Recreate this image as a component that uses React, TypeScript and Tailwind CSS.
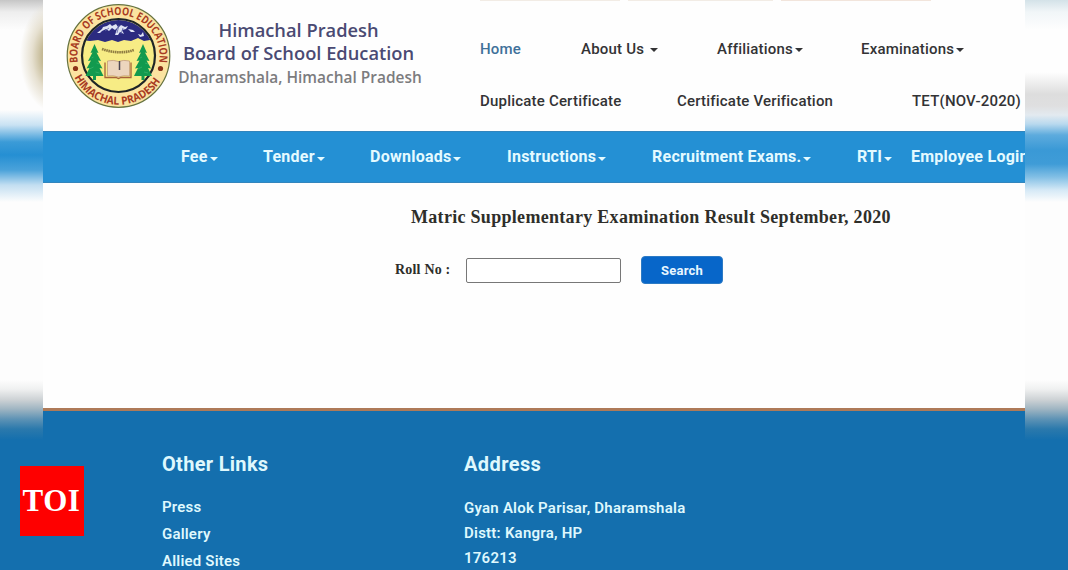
import React from "react";

function Caret({ className = "" }: { className?: string }) {
  return (
    <svg viewBox="0 0 8 4" className={`inline-block h-1 w-2 shrink-0 fill-current ${className}`}>
      <path d="M0 0h8L4 4z" />
    </svg>
  );
}

function Tree({ x }: { x: number }) {
  return (
    <g transform={`translate(${x} 0)`} fill="#129a4e">
      <path d="M0 44l-4 9 2-.5-4.500 8.500 3-.5-4.500 8 3-.5-4 8h7.500v4h3v-4h7.500l-4-8 3 .5-4.500-8 3 .5-4.500-8.500 2 .5z" />
      <path d="M-3 58l2-1M2 63l3 1M-5 69l4-2M1 72l4 1" stroke="#3ab56e" strokeWidth=".7" />
    </g>
  );
}

function Seal() {
  return (
    <svg viewBox="66 3 106 106" className="h-[106px] w-[106px] shrink-0">
      <defs>
        <clipPath id="sealInner">
          <circle cx="118.500" cy="55.500" r="35.500" />
        </clipPath>
        <path id="arcTop" d="M77.800 62.500A41.200 41.200 0 1 1 159.200 62.500" />
        <path id="arcBottom" d="M69.700 61A49.100 49.100 0 0 0 167.300 61" />
      </defs>
      <circle cx="118.500" cy="56" r="51.300" fill="#fbe3a0" stroke="#66733f" strokeWidth="1.200" />
      <circle cx="118.500" cy="55.500" r="36.500" fill="#f7ec85" stroke="#1e2526" strokeWidth="2.200" />
      <g clipPath="url(#sealInner)">
        <path d="M80 18h77v24l-7-2-6 1-6-3-7 3-7-1-6 2-6-2-7 2-7-2-8 1-10-1z" fill="#2b2b80" />
        <path
          d="M97 33l5-4 1-2 4-1 3-2 2 2 4-2 2 3-3 3-3-2-3 3-3-2-4 2-2 2zM115 35l2-6 4-4 4 2 3-1-2 3-4 1 2 4-4-2-2 3zM128 29l5 1 2 2-4 0zM138 34l3 1 2-3 1 4-4 1z"
          fill="#dfe3f4"
        />
        <path d="M119 25l-2 8M123 28l-2 6M105 31l4-3" stroke="#5c62a5" strokeWidth=".8" />
      </g>
      <Tree x={94.5} />
      <Tree x={143} />
      <path d="M102 49q17 6 32 1" fill="none" stroke="#8f7d42" strokeWidth="2.600" strokeDasharray="1.600 .6" />
      <path d="M105 62.500v15h11l2.500 1 2.500-1h10v-15" fill="none" stroke="#a8613a" strokeWidth="1.300" />
      <path d="M107.500 61q6-1.500 11 .500 5-2 11-.500v15q-6-1-11 1-5-2-11-1z" fill="#ecd5bd" stroke="#bf9472" strokeWidth=".7" />
      <path d="M119.500 61v9" stroke="#4c4550" strokeWidth="1.500" />
      <circle cx="75.500" cy="68.500" r="2.600" fill="#8c3218" />
      <circle cx="160.500" cy="68.500" r="2.600" fill="#8c3218" />
      <g fill="#a83b22" fontFamily="Open Sans, Noto Sans, sans-serif" fontWeight="700">
        <text fontSize="11">
          <textPath href="#arcTop" textLength="142" lengthAdjust="spacingAndGlyphs">
            BOARD OF SCHOOL EDUCATION
          </textPath>
        </text>
        <text fontSize="11">
          <textPath href="#arcBottom" startOffset="17" textLength="105" lengthAdjust="spacingAndGlyphs">
            HIMACHAL PRADESH
          </textPath>
        </text>
      </g>
    </svg>
  );
}

function BlurredEdge({ side }: { side: "left" | "right" }) {
  return (
    <div className="flex w-[43px] shrink-0 flex-col overflow-hidden">
      {side === "left" ? (
        <div className="h-[380px] shrink-0 bg-[radial-gradient(ellipse_34px_56px_at_54px_56px,#b5a676_0%,#c4b994_35%,#e6e0d0_65%,transparent_100%),linear-gradient(#c6c6c6_0px,#eeeeee_12px,#fdfdfd_30px,#fdfdfd_110px,#c9e2f3_125px,#3b9bd7_142px,#258fd3_155px,#4aa2da_170px,#c2def1_185px,#fdfdfd_202px)]" />
      ) : (
        <div className="h-[380px] shrink-0 bg-[linear-gradient(#d3e2e8_0px,#f1f6f8_12px,#fefefe_30px,#fefefe_72px,#eeeeee_83px,#dddddd_94px,#dfdfe0_106px,#e3eaf0_115px,#b9d9ee_124px,#5dabdd_135px,#3a99d6_150px,#3f9cd7_164px,#82bfe5_177px,#d5e9f6_190px,#fdfdfd_202px)]" />
      )}
      <div className="flex-1 bg-[linear-gradient(#fdfdfd_0px,#f0f1f1_9px,#ccd1d4_20px,#9fb5c2_29px,#5e93b5_39px,#2b79ac_49px,#146fae_60px)]" />
    </div>
  );
}

const blueMenu: { label: string; width: string }[] = [
  { label: "Fee", width: "w-[82px]" },
  { label: "Tender", width: "w-[107px]" },
  { label: "Downloads", width: "w-[137px]" },
  { label: "Instructions", width: "w-[145px]" },
  { label: "Recruitment Exams.", width: "w-[205px]" },
  { label: "RTI", width: "w-[54px]" },
];

export default function App() {
  return (
    <div className="relative flex h-[570px] w-[1068px] overflow-hidden bg-[#fefefe] font-['Roboto',sans-serif]">
      <BlurredEdge side="left" />

      <div className="flex w-[982px] shrink-0 flex-col overflow-hidden">
        <header className="flex h-[131px] shrink-0">
          <div className="flex pt-[3px] pl-[23px]">
            <Seal />
            <div className="flex w-[257px] flex-col items-center pt-[15px] pr-[4px] font-['Open_Sans',sans-serif] font-semibold whitespace-nowrap">
              <div className="text-[18.300px] leading-[23px] text-[#4a4a73]">Himachal Pradesh</div>
              <div className="text-[18.300px] leading-[23px] text-[#4a4a73]">Board of School Education</div>
              <div className="mt-[2px] pl-[3px] text-[15.450px] leading-[23px] text-[#7c7c7e]">
                Dharamshala, Himachal Pradesh
              </div>
            </div>
          </div>
          <nav className="flex flex-1 flex-col pl-[51px] text-[15px] font-medium tracking-[0.200px] whitespace-nowrap text-[#333335]">
            <div className="flex h-[2px] gap-2">
              <span className="h-px w-[140px] bg-[#f2ece5]" />
              <span className="h-px w-[145px] bg-[#f2ece5]" />
              <span className="h-px w-[150px] bg-[#f2e5dc]" />
            </div>
            <div className="mt-[37px] flex h-5 items-center">
              <a className="w-[101px] text-[#3f719a]">Home</a>
              <a className="flex w-[136px] items-center">About Us<Caret className="ml-[6px] mt-[2px]" /></a>
              <a className="flex w-[144px] items-center">Affiliations<Caret className="ml-[2px] mt-[2px]" /></a>
              <a className="flex items-center">Examinations<Caret className="ml-[2px] mt-[2px]" /></a>
            </div>
            <div className="mt-8 flex h-5 items-center">
              <a className="w-[197px]">Duplicate Certificate</a>
              <a className="w-[235px]">Certificate Verification</a>
              <a>TET(NOV-2020)</a>
            </div>
          </nav>
        </header>

        <nav className="flex h-[52px] shrink-0 items-center border-y border-[#3285bd] bg-[#2490d4] pl-[138px] text-[16px] font-bold tracking-[0.250px] whitespace-nowrap text-[#e4faff]">
          {blueMenu.map((m) => (
            <a key={m.label} className={`flex shrink-0 items-center ${m.width}`}>
              {m.label}
              <Caret className="mt-[3px] ml-[2px]" />
            </a>
          ))}
          <a className="shrink-0">Employee Login</a>
        </nav>

        <main className="flex h-[225px] shrink-0 flex-col font-['Liberation_Serif',serif] font-bold text-[#2e2e2a]">
          <h1 className="mt-[22px] pl-[368px] text-[18px] leading-6 tracking-[0.300px] whitespace-nowrap">
            Matric Supplementary Examination Result September, 2020
          </h1>
          <div className="mt-[26px] flex h-[30px] items-center pl-[352px]">
            <label className="w-[71px] pb-[2px] text-[14px] tracking-[0.200px]">Roll No :</label>
            <input className="h-[25px] w-[155px] rounded-[2px] border border-[#777777] bg-white outline-none" />
            <button className="ml-5 h-[28px] w-[82px] rounded-[4px] border border-[#2c7ac4] bg-[#0766c9] pt-px font-['Roboto',sans-serif] text-[13px] font-bold tracking-[0.200px] text-[#e8f6ff]">
              Search
            </button>
          </div>
        </main>

        <footer className="flex flex-1 border-t-[3px] border-[#ae7a58] bg-[#146fae] pl-[119px] whitespace-nowrap text-[#dff8fd]">
          <section className="w-[302px] pt-[41px]">
            <h2 className="text-[20px] leading-6 font-bold tracking-[0.300px]">Other Links</h2>
            <ul className="mt-[18px] text-[15px] leading-[27px] font-semibold tracking-[0.200px]">
              <li>Press</li>
              <li>Gallery</li>
              <li>Allied Sites</li>
            </ul>
          </section>
          <section className="pt-[41px]">
            <h2 className="text-[20px] leading-6 font-bold tracking-[0.400px]">Address</h2>
            <address className="mt-[20px] text-[15px] leading-[25px] font-semibold tracking-[0.230px] not-italic">
              Gyan Alok Parisar, Dharamshala
              <br />
              Distt: Kangra, HP
              <br />
              176213
            </address>
          </section>
        </footer>
      </div>

      <BlurredEdge side="right" />

      <div className="absolute top-[466px] left-[20px] flex h-[70px] w-[64px] items-center justify-center bg-[#fe0000] pr-px pb-[2px] font-['Liberation_Serif',serif] text-[31px] leading-none font-bold tracking-[0.500px] text-white">
        TOI
      </div>
    </div>
  );
}
